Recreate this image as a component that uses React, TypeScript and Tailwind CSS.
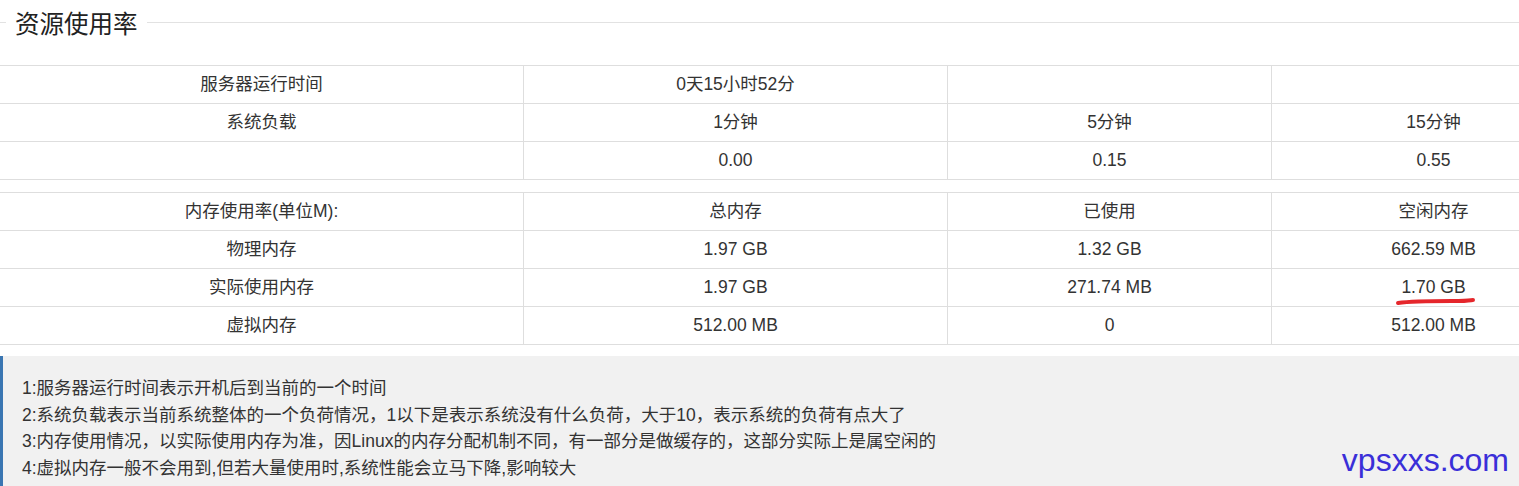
import React from "react";

const font = { fontFamily: '"Liberation Sans", "Noto Sans CJK SC", sans-serif' };

function Row({ cells, last }: { cells: string[]; last?: boolean }) {
  const widths = ["w-[523px]", "w-[424px]", "w-[324px]", "w-[324px]"];
  return (
    <div
      className={`flex border-t border-[#dedede] ${last ? "h-[39px] border-b" : "h-[38px]"}`}
    >
      {cells.map((c, i) => (
        <div
          key={i}
          className={`${widths[i]} shrink-0 flex items-center justify-center ${
            i > 0 ? "border-l border-[#dedede]" : ""
          }`}
        >
          {c}
        </div>
      ))}
    </div>
  );
}

export default function App() {
  return (
    <div
      className="relative w-[1519px] h-[486px] overflow-hidden bg-white text-[#333] text-[17.5px]"
      style={font}
    >
      {/* title */}
      <div className="flex items-center h-[44px] mb-[21px]">
        <div className="w-[6px] h-px bg-[#e2e2e2] shrink-0" />
        <span className="px-[9px] pt-[6px] text-[24.5px] leading-none text-[#222] shrink-0">
          资源使用率
        </span>
        <div className="flex-1 h-px bg-[#e2e2e2]" />
      </div>

      <div className="w-[1595px]">
        <Row cells={["服务器运行时间", "0天15小时52分", "", ""]} />
        <Row cells={["系统负载", "1分钟", "5分钟", "15分钟"]} />
        <Row cells={["", "0.00", "0.15", "0.55"]} last />
      </div>

      <div className="w-[1595px] mt-[12px]">
        <Row cells={["内存使用率(单位M):", "总内存", "已使用", "空闲内存"]} />
        <Row cells={["物理内存", "1.97 GB", "1.32 GB", "662.59 MB"]} />
        <Row cells={["实际使用内存", "1.97 GB", "271.74 MB", "1.70 GB"]} />
        <Row cells={["虚拟内存", "512.00 MB", "0", "512.00 MB"]} last />
      </div>

      <div className="mt-[11px] border-l-[3px] border-[#3a76b2] bg-[#f1f1f1] pl-[19px] pt-[19px] pb-[19px] leading-[26.7px] text-[#333]">
        <div>1:服务器运行时间表示开机后到当前的一个时间</div>
        <div>2:系统负载表示当前系统整体的一个负荷情况，1以下是表示系统没有什么负荷，大于10，表示系统的负荷有点大了</div>
        <div>3:内存使用情况，以实际使用内存为准，因Linux的内存分配机制不同，有一部分是做缓存的，这部分实际上是属空闲的</div>
        <div>4:虚拟内存一般不会用到,但若大量使用时,系统性能会立马下降,影响较大</div>
      </div>

      {/* red annotation underline */}
      <svg
        className="absolute left-[1392px] top-[293px]"
        width="90"
        height="16"
        viewBox="0 0 90 16"
      >
        <path
          d="M6 10 C 20 8, 40 8, 60 8 S 78 7, 81 7"
          stroke="#e5262b"
          strokeWidth="4"
          strokeLinecap="round"
          fill="none"
        />
      </svg>

      {/* watermark */}
      <div
        className="absolute right-[10px] top-[444px] text-[32px] leading-none text-[#3a2fd8]"
        style={{ fontFamily: '"Liberation Sans", Arial, sans-serif' }}
      >
        vpsxxs.com
      </div>
    </div>
  );
}
